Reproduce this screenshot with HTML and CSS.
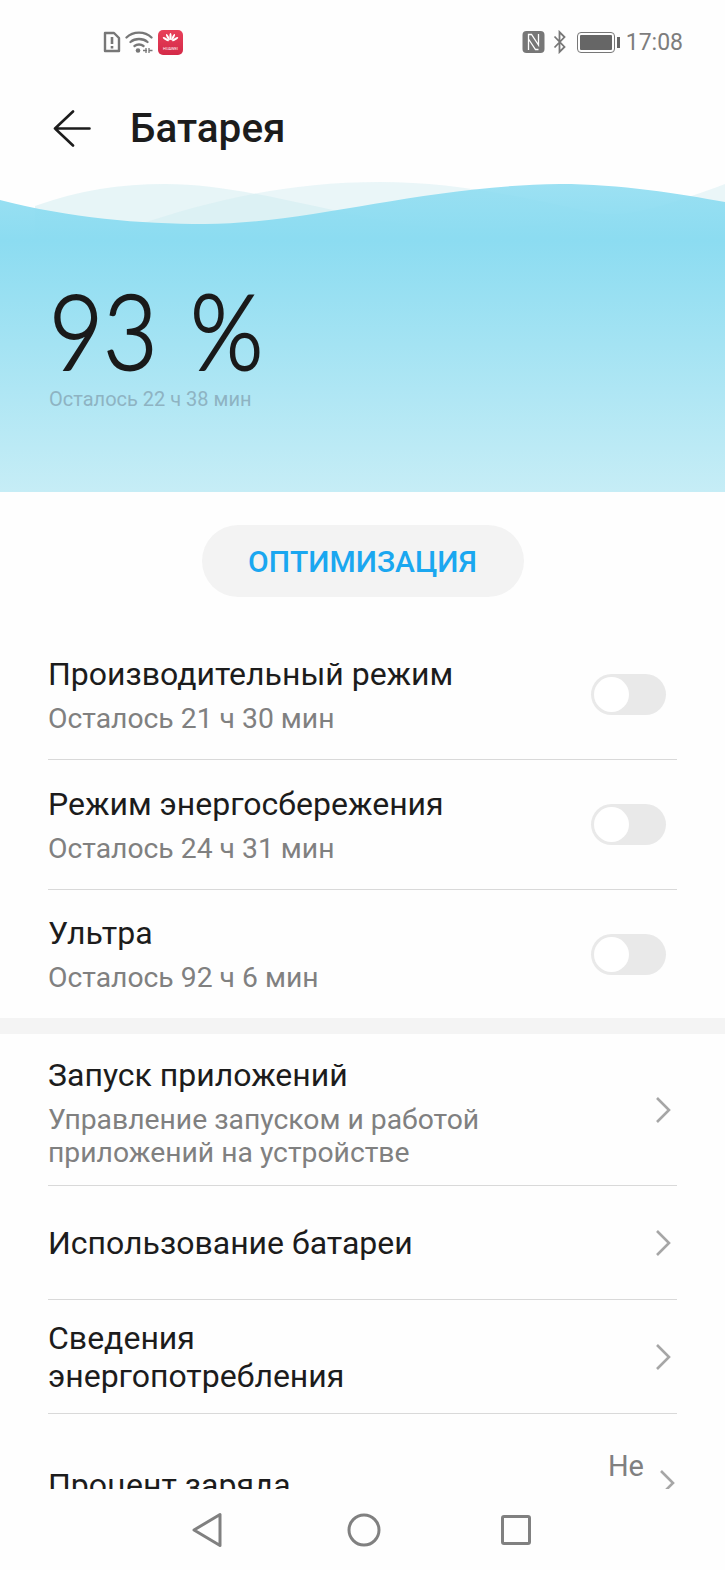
FILE: index.html
```html
<!DOCTYPE html>
<html lang="ru">
<head>
    <meta charset="UTF-8">
    <meta name="viewport" content="width=device-width, initial-scale=1.0">
    <title>Батарея</title>
    <link rel="stylesheet" href="styles.css">
</head>
<body>
    <div class="page">
        <div class="statusbar">
            <div class="status-left">
                <svg width="18" height="22" viewBox="0 0 18 22"><path d="M2 2h9l5 5v13H2z" fill="none" stroke="#777" stroke-width="2.4" stroke-linejoin="round"/><path d="M9 6v7M9 15v2.500" stroke="#777" stroke-width="2.600"/></svg>
                <svg width="30" height="24" viewBox="0 0 30 24"><path d="M1.500 7.500C8 1 20 1 26.500 7.500M5.500 12c4.500-4 12.500-4 17 0M9.500 16c2.500-2 6.500-2 9 0" fill="none" stroke="#777" stroke-width="2.300" stroke-linecap="round"/><circle cx="13" cy="20.500" r="2.300" fill="#777"/><path d="M18 20.500h4M21 18v5M24 18v5M23.500 20.500h4" stroke="#777" stroke-width="1.300" fill="none"/></svg>
                <div class="huawei-icon">
                    <svg width="17" height="13" viewBox="0 0 16 13"><g fill="#fff"><ellipse cx="8" cy="3.500" rx="1.100" ry="3.500"/><ellipse cx="8" cy="3.500" rx="1.100" ry="3.500" transform="rotate(28 8 9)"/><ellipse cx="8" cy="3.500" rx="1.100" ry="3.500" transform="rotate(-28 8 9)"/><ellipse cx="8" cy="3.500" rx="1.100" ry="3.500" transform="rotate(58 8 9)"/><ellipse cx="8" cy="3.500" rx="1.100" ry="3.500" transform="rotate(-58 8 9)"/></g></svg>
                    <span class="huawei-label">HUAWEI</span>
                </div>
            </div>
            <div class="status-right">
                <svg width="23" height="24" viewBox="0 0 23 24"><rect x="0.500" y="1" width="22" height="22" rx="4" fill="#777"/><path d="M6.500 20V4.500H9.500L16.500 15V4M16.500 19.500H13.500L6.500 9" fill="none" stroke="#fff" stroke-width="1.300"/></svg>
                <svg class="bluetooth" width="14" height="24" viewBox="0 0 14 24"><path d="M1.500 6.500l10 10.500-5 5V2l5 5-10 10.500" fill="none" stroke="#777" stroke-width="1.800"/></svg>
                <div class="battery"><div class="battery-fill"></div></div>
                <div class="battery-tip"></div>
                <span class="clock">17:08</span>
            </div>
        </div>

        <div class="titlebar">
            <svg class="back" width="38" height="37" viewBox="0 0 38 37"><path d="M36.500 18.500H2M20 1.500L2 18.500l18 17" fill="none" stroke="#1c1c1c" stroke-width="2.600" stroke-linecap="round" stroke-linejoin="round"/></svg>
            <h1>Батарея</h1>
        </div>

        <div class="hero">
            <svg class="waves" width="725" height="58" viewBox="0 0 725 58" preserveAspectRatio="none">
                <defs>
                    <linearGradient id="front" x1="0" y1="0" x2="0" y2="1">
                        <stop offset="0" stop-color="#8cdcf1" stop-opacity=".86"/>
                        <stop offset="1" stop-color="#8cdcf1" stop-opacity="1"/>
                    </linearGradient>
                </defs>
                <path d="M35 24C80 8 120 2 165 2C230 2 300 22 380 38C440 50 500 48 560 40V58H35z" fill="#cdebf0" opacity=".45"/>
                <path d="M140 42C200 22 280 0 380 0C450 0 510 12 590 30C620 36 650 30 725 2V58H140z" fill="#cdebf0" opacity=".4"/>
                <path d="M0 18C70 36 140 42 205 42C310 42 420 4 560 2C620 2 680 12 725 20V58H0z" fill="url(#front)"/>
            </svg>
            <div class="hero-body">
                <div class="percent">93 %</div>
                <div class="hero-note">Осталось 22 ч 38 мин</div>
            </div>
        </div>

        <div class="content">
            <div class="action-wrap">
                <button class="action">ОПТИМИЗАЦИЯ</button>
            </div>

            <div class="group">
                <div class="row">
                    <div class="row-text">
                        <div class="row-title">Производительный режим</div>
                        <div class="row-sub">Осталось 21 ч 30 мин</div>
                    </div>
                    <div class="toggle"><div class="knob"></div></div>
                </div>
                <div class="row">
                    <div class="row-text">
                        <div class="row-title">Режим энергосбережения</div>
                        <div class="row-sub">Осталось 24 ч 31 мин</div>
                    </div>
                    <div class="toggle"><div class="knob"></div></div>
                </div>
                <div class="row last">
                    <div class="row-text">
                        <div class="row-title">Ультра</div>
                        <div class="row-sub">Осталось 92 ч 6 мин</div>
                    </div>
                    <div class="toggle"><div class="knob"></div></div>
                </div>
            </div>

            <div class="divider"></div>

            <div class="group">
                <div class="row link tall">
                    <div class="row-text">
                        <div class="row-title">Запуск приложений</div>
                        <div class="row-sub">Управление запуском и работой<br>приложений на устройстве</div>
                    </div>
                    <svg class="chevron" width="16" height="28" viewBox="0 0 16 28"><path d="M2 2l12 12L2 26" fill="none" stroke="#a6a6a6" stroke-width="2.600"/></svg>
                </div>
                <div class="row link mid">
                    <div class="row-text">
                        <div class="row-title">Использование батареи</div>
                    </div>
                    <svg class="chevron" width="16" height="28" viewBox="0 0 16 28"><path d="M2 2l12 12L2 26" fill="none" stroke="#a6a6a6" stroke-width="2.600"/></svg>
                </div>
                <div class="row link mid">
                    <div class="row-text">
                        <div class="row-title">Сведения<br>энергопотребления</div>
                    </div>
                    <svg class="chevron" width="16" height="28" viewBox="0 0 16 28"><path d="M2 2l12 12L2 26" fill="none" stroke="#a6a6a6" stroke-width="2.600"/></svg>
                </div>
                <div class="row link charge">
                    <div class="row-title">Процент заряда</div>
                    <div class="row-value">
                        <span class="value-text">Не</span>
                        <svg class="chevron" width="16" height="28" viewBox="0 0 16 28"><path d="M2 2l12 12L2 26" fill="none" stroke="#a6a6a6" stroke-width="2.600"/></svg>
                    </div>
                </div>
            </div>
        </div>

        <div class="navbar">
            <svg class="nav-back" width="32" height="36" viewBox="0 0 32 36"><path d="M29 2.500V33.500L3 18z" fill="none" stroke="#808080" stroke-width="3" stroke-linejoin="round"/></svg>
            <svg width="34" height="34" viewBox="0 0 34 34"><circle cx="17" cy="17" r="15" fill="none" stroke="#808080" stroke-width="3"/></svg>
            <svg width="30" height="30" viewBox="0 0 30 30"><rect x="1.500" y="1.500" width="27" height="27" rx="1.500" fill="none" stroke="#808080" stroke-width="3"/></svg>
        </div>
    </div>
</body>
</html>
```

FILE: styles.css
```css
body {
    margin: 0;
    padding: 0;
    background-color: #fefefe;
    font-family: Roboto, "Noto Sans", sans-serif;
    color: #1c1c1c;
}
.page {
    width: 725px;
    height: 1570px;
    display: flex;
    flex-direction: column;
    overflow: hidden;
}
.statusbar {
    height: 84px;
    display: flex;
    justify-content: space-between;
    align-items: center;
    padding: 0 42px 0 103px;
    flex-shrink: 0;
}
.status-left, .status-right {
    display: flex;
    align-items: center;
}
.status-left {
    gap: 4px;
}
.status-right {
    gap: 6px;
}
.bluetooth {
    margin-left: 2px;
}
.huawei-icon {
    width: 25px;
    height: 25px;
    margin-left: -1px;
    border-radius: 5px;
    background: linear-gradient(#e8405a, #d42a48);
    display: flex;
    flex-direction: column;
    align-items: center;
    justify-content: center;
}
.huawei-label {
    font-size: 4px;
    line-height: 5px;
    color: #fff;
}
.battery {
    width: 38px;
    height: 21px;
    box-sizing: border-box;
    border: 1.500px solid #777;
    border-radius: 4px;
    padding: 2px;
    margin-left: 4px;
}
.battery-fill {
    width: 100%;
    height: 100%;
    background-color: #666;
    border-radius: 1px;
}
.battery-tip {
    width: 3px;
    height: 11px;
    background-color: #666;
    margin-left: -4px;
}
.clock {
    font-size: 23px;
    color: #7d7d7d;
}
.titlebar {
    height: 88px;
    display: flex;
    align-items: center;
    padding-left: 53px;
    flex-shrink: 0;
}
.back {
    margin-right: 39px;
}
.titlebar h1 {
    margin: 0;
    font-size: 40.500px;
    font-weight: 500;
}
.hero {
    margin-top: 10px;
    flex-shrink: 0;
}
.waves {
    display: block;
}
.hero-body {
    height: 252px;
    padding-left: 49px;
    background: linear-gradient(#8cdcf1, #c6edf6);
}
.percent {
    font-family: Lato, sans-serif;
    font-weight: 300;
    font-size: 104px;
    line-height: 100px;
    padding-top: 40px;
    word-spacing: 8px;
    color: #1a1a1a;
    -webkit-text-stroke: 2px #1a1a1a;
    transform: scaleX(.9);
    transform-origin: left;
}
.hero-note {
    font-size: 20px;
    color: #8eb3c2;
    margin-top: 7px;
}
.content {
    flex: 1;
    min-height: 0;
    overflow: hidden;
}
.action-wrap {
    display: flex;
    justify-content: center;
    padding: 33px 0 33px;
}
.action {
    width: 322px;
    height: 72px;
    border: none;
    border-radius: 36px;
    background-color: #f3f3f3;
    color: #1aa7f0;
    font-family: Roboto, sans-serif;
    font-size: 30px;
    font-weight: 500;
}
.group {
    padding: 0 48px;
}
.row {
    height: 130px;
    display: flex;
    align-items: center;
    justify-content: space-between;
    border-bottom: 1px solid #d9d9d9;
    box-sizing: border-box;
}
.row.last {
    height: 128px;
    border-bottom: none;
}
.row-title {
    font-size: 32px;
    line-height: 38px;
}
.row-sub {
    font-size: 28.300px;
    line-height: 33px;
    color: #808080;
    margin-top: 9px;
}
.row.tall .row-text {
    margin-top: 6px;
}
.toggle {
    width: 75px;
    height: 41px;
    margin-right: 11px;
    border-radius: 21px;
    background-color: #e9e9e9;
    box-sizing: border-box;
    padding: 3px;
}
.knob {
    width: 35px;
    height: 35px;
    border-radius: 50%;
    background-color: #fff;
}
.divider {
    height: 16px;
    background-color: #f4f4f4;
}
.row.tall {
    height: 152px;
}
.row.mid {
    height: 114px;
}
.row.charge {
    height: 114px;
    align-items: flex-start;
    padding-top: 52px;
}
.chevron {
    margin-right: 6px;
    flex-shrink: 0;
}
.row-value {
    display: flex;
    align-items: flex-start;
    margin-top: -17px;
}
.value-text {
    font-size: 29px;
    color: #808080;
    margin-right: 15px;
}
.row-value .chevron {
    margin-top: 20px;
    margin-right: 2px;
}
.navbar {
    height: 81px;
    flex-shrink: 0;
    background-color: #fefefe;
    display: flex;
    align-items: center;
    justify-content: center;
    gap: 120px;
}
.nav-back {
    margin-right: 4px;
    margin-left: -4px;
}
```
